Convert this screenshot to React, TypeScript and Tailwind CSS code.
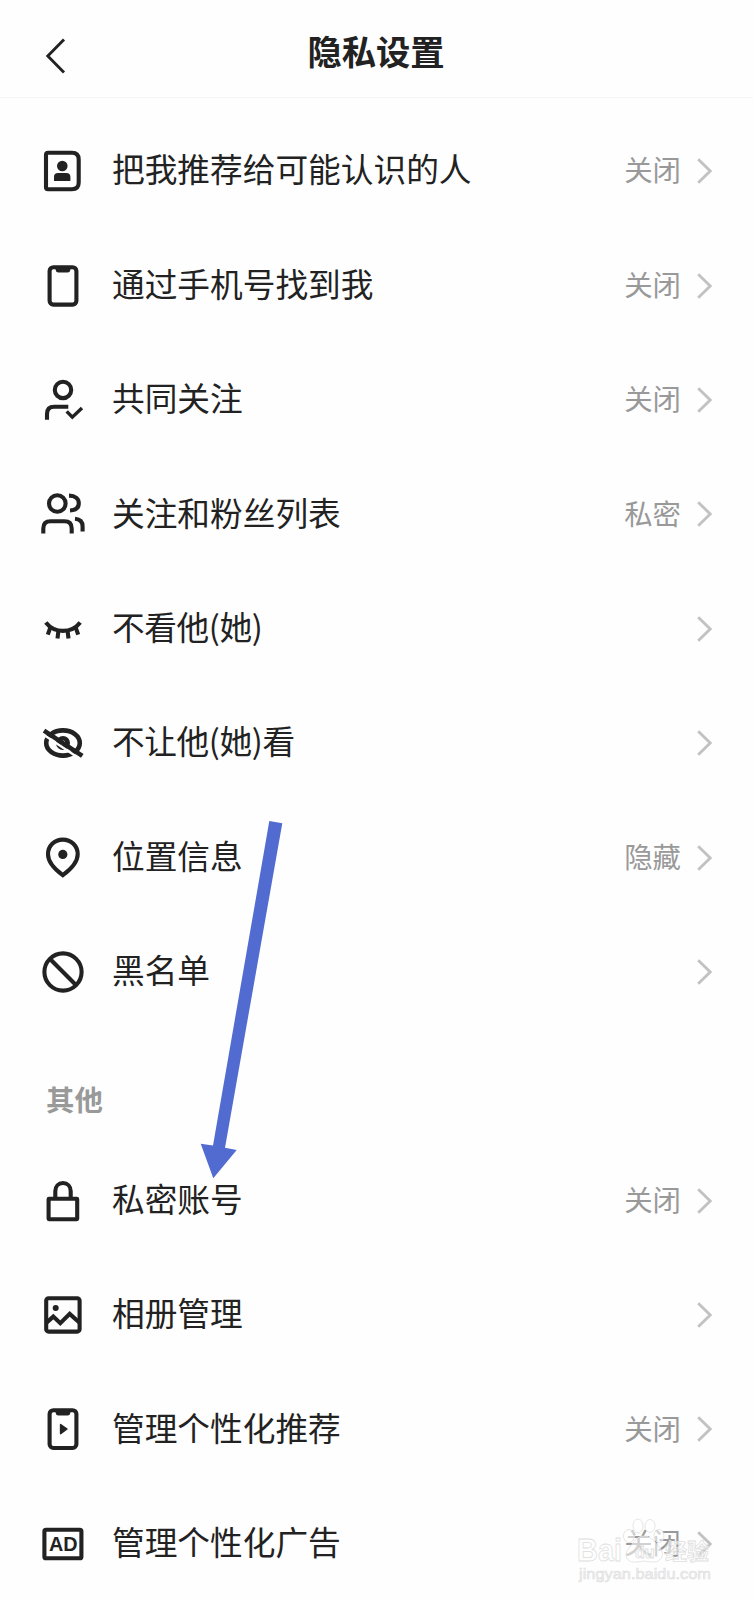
import React from "react";

interface RowItem {
  label: string;
  value?: string;
  icon: React.ReactNode;
}

const mainRows: RowItem[] = [
  {
    label: "把我推荐给可能认识的人",
    value: "关闭",
    icon: (
      <>
        <path d="M9 5.7H33Q39.7 5.7 39.7 12.4V35.6Q39.7 42.3 33 42.3H9Q7 42.3 7 40.3V7.7Q7 5.7 9 5.7Z" />
        <circle cx="23.3" cy="19" r="5.3" fill="currentColor" stroke="none" />
        <path d="M15 34V30Q15 26 19 26H27.4Q31.4 26 31.4 30V34Z" fill="currentColor" stroke="none" />
      </>
    ),
  },
  {
    label: "通过手机号找到我",
    value: "关闭",
    icon: (
      <>
        <rect x="10.6" y="5.2" width="26.8" height="37.4" rx="3.8" />
        <path d="M15 5H33Q31.3 6 31.3 8Q31 10.6 28.6 10.6H19.4Q17 10.6 16.7 8Q16.7 6 15 5Z" fill="currentColor" stroke="none" />
      </>
    ),
  },
  {
    label: "共同关注",
    value: "关闭",
    icon: (
      <>
        <circle cx="24" cy="13.9" r="8.2" />
        <path d="M8 43.8V38Q8 30.8 15.2 30.8H29.3" />
        <path d="M27.7 35.4L33.3 41.2L43 32" strokeWidth="3.4" />
      </>
    ),
  },
  {
    label: "关注和粉丝列表",
    value: "私密",
    icon: (
      <>
        <circle cx="18.3" cy="13.5" r="8.3" />
        <path d="M30 5.6C36.4 5.6 39.8 8.8 39.8 13.2C39.8 17.5 36.6 20.2 31 20.5" />
        <path d="M4.3 43.5V38.4Q4.3 31.2 11.5 31.2H25.5Q32.7 31.2 32.7 38.4V43.5" />
        <path d="M36 28.8Q43.6 29.4 43.6 36.5V41.5" />
      </>
    ),
  },
  {
    label: "不看他(她)",
    icon: (
      <>
        <path d="M6.8 17.5Q13.4 25.9 24 25.9Q34.6 25.9 41.2 17.5" />
        <path d="M11.3 22.6L8.8 29.6M19.4 26L18.5 33.6M28.6 26L29.5 33.6M36.7 22.6L39.2 29.6" />
      </>
    ),
  },
  {
    label: "不让他(她)看",
    icon: (
      <>
        <ellipse cx="24" cy="24" rx="16.8" ry="12.6" strokeWidth="4.6" />
        <circle cx="24" cy="24" r="4.7" strokeWidth="4.6" />
        <path d="M6.5 17L40 39.2" stroke="#fefefe" strokeWidth="2.4" />
        <path d="M5 11.7L43.3 36.9" strokeWidth="4.6" />
      </>
    ),
  },
  {
    label: "位置信息",
    value: "隐藏",
    icon: (
      <>
        <path d="M23.8 41.2C16 35.4 9 28.6 9 20.2C9 11.8 15.4 5.6 23.8 5.6C32.2 5.6 38.7 11.8 38.7 20.2C38.7 28.6 31.6 35.4 23.8 41.2Z" />
        <circle cx="23.8" cy="20.4" r="4.6" fill="currentColor" stroke="none" />
      </>
    ),
  },
  {
    label: "黑名单",
    icon: (
      <>
        <circle cx="24" cy="24" r="18.6" />
        <path d="M10.8 10.8L37.2 37.2" />
      </>
    ),
  },
];

const otherRows: RowItem[] = [
  {
    label: "私密账号",
    value: "关闭",
    icon: (
      <>
        <rect x="9.6" y="21.8" width="28.6" height="20.4" rx="0.4" />
        <path d="M16.3 21V14.2C16.3 9.4 19.5 6 24 6C28.5 6 31.7 9.4 31.7 14.2V21" />
      </>
    ),
  },
  {
    label: "相册管理",
    icon: (
      <>
        <rect x="7.2" y="7.2" width="33.4" height="33.4" rx="2.4" />
        <circle cx="16.7" cy="17" r="3" fill="currentColor" stroke="none" />
        <path d="M7.5 31.6L14.3 25.6L21.3 32.2L30.7 22.9L40.3 31.6" />
      </>
    ),
  },
  {
    label: "管理个性化推荐",
    value: "关闭",
    icon: (
      <>
        <rect x="10.6" y="5.2" width="26.8" height="37.8" rx="3.8" />
        <path d="M15 5H33Q31.3 6 31.3 8Q31 10.6 28.6 10.6H19.4Q17 10.6 16.7 8Q16.7 6 15 5Z" fill="currentColor" stroke="none" />
        <path d="M21.6 19.6L28 24L21.6 28.6Z" fill="currentColor" strokeWidth="1.5" strokeLinejoin="round" />
      </>
    ),
  },
  {
    label: "管理个性化广告",
    value: "关闭",
    icon: (
      <>
        <rect x="5.4" y="9.7" width="37" height="28.6" rx="1.6" />
        <text
          x="24.2"
          y="31"
          textAnchor="middle"
          fontSize="19.8"
          fontWeight="700"
          fill="currentColor"
          stroke="none"
          className="font-['Liberation_Sans',sans-serif]"
        >
          AD
        </text>
      </>
    ),
  },
];

const Row: React.FC<RowItem> = ({ label, value, icon }) => (
  <div className="flex h-[114.4px] items-center pl-[39px] pr-[39px]">
    <svg viewBox="0 0 48 48" className="size-12 shrink-0" fill="none" stroke="currentColor" strokeWidth="4.1">
      {icon}
    </svg>
    <span
      className={`mb-[5px] ml-[25px] flex-1 whitespace-nowrap text-[32.7px] leading-none ${
        label.includes("(") ? "tracking-[-0.4px]" : ""
      }`}
    >
      {label}
    </span>
    {value && <span className="mb-[3px] text-[28.4px] leading-none text-[#999999]">{value}</span>}
    <svg viewBox="0 0 18 28" className="ml-[15px] h-7 w-[18px] text-[#c2c2c2]" fill="none" stroke="currentColor" strokeWidth="2.9">
      <path d="M2.2 2.3L14.2 14L2.2 25.7" />
    </svg>
  </div>
);

const Watermark: React.FC = () => (
  <svg
    viewBox="0 0 150 80"
    className="absolute left-[570px] top-[1512px] h-20 w-[150px] font-['Liberation_Sans','Noto_Sans_CJK_SC',sans-serif]"
    fill="white"
    fillOpacity="0.55"
    stroke="#dedede"
    strokeWidth="0.8"
  >
    <text x="7" y="49" fontSize="31" fontWeight="700" textLength="45" lengthAdjust="spacingAndGlyphs">Bai</text>
    <ellipse cx="59" cy="24" rx="5.5" ry="6.5" />
    <ellipse cx="68" cy="14" rx="5" ry="7" />
    <ellipse cx="80" cy="14" rx="5" ry="6.5" />
    <ellipse cx="89" cy="24" rx="5" ry="6.5" />
    <path d="M74 24C82 24 85 31 90 36C96 43 90 51 82 50Q74 48 66 50C57 51 53 43 59 36C64 31 66 24 74 24Z" />
    <text x="65" y="46" fontSize="16" fontWeight="700">du</text>
    <text x="95" y="47" fontSize="22" fontWeight="700">经验</text>
    <text x="9" y="67" fontSize="15.5" fill="#e4e4e4" fillOpacity="0.5" strokeWidth="0.6" textLength="132" lengthAdjust="spacingAndGlyphs">
      jingyan.baidu.com
    </text>
  </svg>
);

const App: React.FC = () => {
  return (
    <div className="relative h-[1600px] w-[753px] overflow-hidden bg-[#fefefe] font-['Noto_Sans_CJK_SC',sans-serif] text-[#222222]">
      <header className="flex h-[98px] items-center border-b border-[#f5f5f5] pl-[44px]">
        <svg viewBox="0 0 24 36" className="mt-[14px] h-9 w-6" fill="none" stroke="currentColor" strokeWidth="2.9">
          <path d="M20 1.6L3.8 18L20 34.4" />
        </svg>
        <h1 className="mr-[69px] mt-1 flex-1 text-center text-[34.3px] font-bold leading-none">隐私设置</h1>
      </header>
      <main className="pt-4">
        {mainRows.map((row) => (
          <Row key={row.label} {...row} />
        ))}
        <h2 className="flex h-[114.4px] items-center pl-[46px] pt-[26px] text-[28.4px] font-bold leading-none text-[#999999]">
          其他
        </h2>
        {otherRows.map((row) => (
          <Row key={row.label} {...row} />
        ))}
      </main>

      {/* pointer to the private account row */}
      <svg viewBox="0 0 90 360" className="absolute left-[199px] top-[820px] h-[360px] w-[90px]">
        <path d="M70.3 1L83.3 3.3L26 327.7L37.7 330L14.3 358.3L1.7 323.7L14 325.5Z" fill="#526bd0" />
      </svg>
      <Watermark />
    </div>
  );
};

export default App;
